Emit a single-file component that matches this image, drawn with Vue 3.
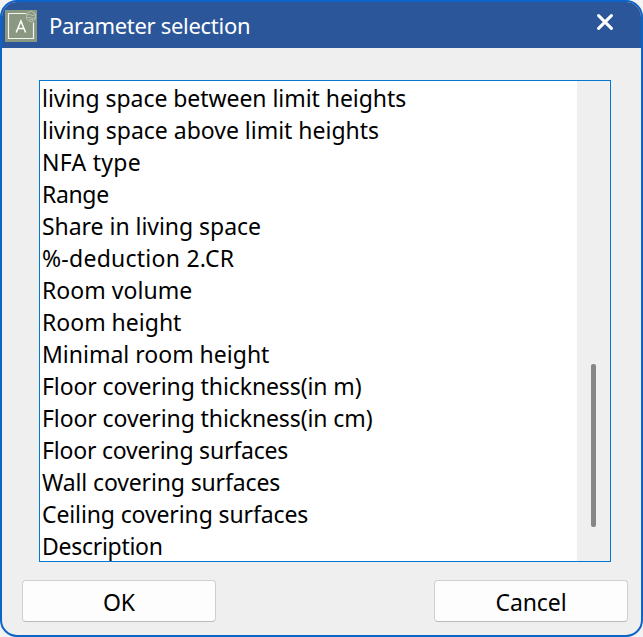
<script setup>
const parameters = [
  { name: 'living space between limit heights', tracking: -0.05 },
  { name: 'living space above limit heights', tracking: -0.01 },
  { name: 'NFA type', tracking: 0.28 },
  { name: 'Range', tracking: -0.35 },
  { name: 'Share in living space', tracking: -0.04 },
  { name: '%-deduction 2.CR', tracking: 0.25 },
  { name: 'Room volume', tracking: 0.05 },
  { name: 'Room height', tracking: 0 },
  { name: 'Minimal room height', tracking: 0 },
  { name: 'Floor covering thickness(in m)', tracking: -0.1 },
  { name: 'Floor covering thickness(in cm)', tracking: -0.1 },
  { name: 'Floor covering surfaces', tracking: -0.2 },
  { name: 'Wall covering surfaces', tracking: -0.14 },
  { name: 'Ceiling covering surfaces', tracking: -0.12 },
  { name: 'Description', tracking: -0.28 },
]
</script>

<template>
  <div class="dialog">
    <header class="titlebar">
      <svg class="app-icon" viewBox="0 0 32 32" width="32" height="32">
        <rect width="32" height="32" fill="#8b9881" />
        <path d="M21 3.500H3.500V28.500H28.500V12.500" fill="none" stroke="#f4f6f2" stroke-width="1.2" />
        <path d="M11.200 22.500L15.900 11L20.600 22.500M12.800 18.600H19" fill="none" stroke="#fff" stroke-width="1.5" />
        <path d="M21.500 3.500L26 1L30.500 3.500V9L26 12L21.500 9Z M22 5Q24 3.500 26 5T30 4.500M22 8Q24 6.500 26 8T30 7.500M24 10.200Q26 9 28 10" fill="none" stroke="#c9d0c3" stroke-width="0.7" />
      </svg>
      <h1 class="title">Parameter selection</h1>
      <button class="close" aria-label="Close">
        <svg viewBox="0 0 16 16" width="16" height="16">
          <path d="M1.600 1.600L14.400 14.400M14.400 1.600L1.600 14.400" stroke="#fff" stroke-width="3" stroke-linecap="round" />
        </svg>
      </button>
    </header>
    <main class="content">
      <div class="listbox">
        <ul class="items">
          <li v-for="p in parameters" :key="p.name" :style="{ letterSpacing: p.tracking + 'px' }">{{ p.name }}</li>
        </ul>
        <div class="scrollbar"><div class="thumb"></div></div>
      </div>
      <footer class="actions">
        <button class="action">OK</button>
        <button class="action">Cancel</button>
      </footer>
    </main>
  </div>
</template>

<style>
body {
  background: #f3f3f3;
}
</style>

<style scoped>
.dialog {
  box-sizing: border-box;
  width: 643px;
  height: 637px;
  border: 2px solid #0c64c6;
  border-radius: 17px;
  background: #efefef;
  overflow: hidden;
  font-family: "Noto Sans", "Open Sans", sans-serif;
  font-size: 23px;
  color: #000;
}
.titlebar {
  display: flex;
  align-items: center;
  box-sizing: border-box;
  height: 46px;
  padding: 1px 28px 0 3px;
  background: #2b579a;
}
.app-icon {
  display: block;
  flex: none;
}
.title {
  flex: 1;
  margin: 0 0 2px 12px;
  font-size: 22px;
  font-weight: 400;
  line-height: 32px;
  letter-spacing: -0.3px;
  color: #fff;
}
.close {
  display: flex;
  padding: 0;
  margin-top: -7px;
  border: 0;
  background: none;
}
.content {
  padding: 32px 13px 0 20px;
}
.listbox {
  display: flex;
  box-sizing: border-box;
  width: 572px;
  height: 482px;
  margin-left: 17px;
  border: 1px solid #0078d4;
  background: #fff;
  overflow: hidden;
}
.items {
  flex: 1;
  margin: 0;
  padding: 1px 0 0 2px;
  list-style: none;
}
.items li {
  height: 32px;
  line-height: 32px;
  white-space: nowrap;
}
.scrollbar {
  width: 33px;
  background: #efefef;
}
.thumb {
  width: 5px;
  height: 163px;
  margin: 283px 0 0 14px;
  border-radius: 2px;
  background: #868686;
}
.actions {
  display: flex;
  justify-content: space-between;
  margin-top: 18px;
}
.action {
  box-sizing: border-box;
  width: 194px;
  height: 42px;
  padding: 2px 0 0;
  border: 1px solid #d0d0d0;
  border-bottom-color: #bbb;
  border-radius: 4px;
  background: #fdfdfd;
  font: inherit;
  line-height: 38px;
  letter-spacing: -0.1px;
  color: #000;
}
</style>
